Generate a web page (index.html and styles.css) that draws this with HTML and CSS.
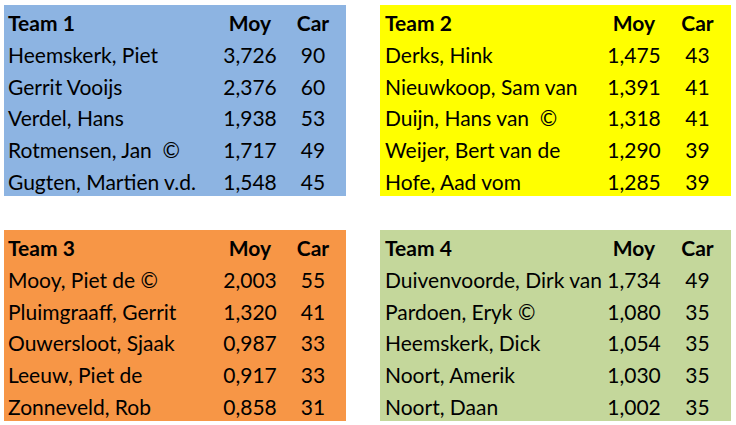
FILE: index.html
```html
<!DOCTYPE html>
<html lang="nl">
<head>
<meta charset="utf-8">
<title>Teams</title>
<link rel="stylesheet" href="styles.css">
</head>
<body>
<div class="board">
  <div class="team team-left blue">
    <div class="cell name head">Team 1</div><div class="cell num head">Moy</div><div class="cell num head">Car</div>
    <div class="cell name">Heemskerk, Piet</div><div class="cell num">3,726</div><div class="cell num">90</div>
    <div class="cell name">Gerrit Vooijs</div><div class="cell num">2,376</div><div class="cell num">60</div>
    <div class="cell name">Verdel, Hans</div><div class="cell num">1,938</div><div class="cell num">53</div>
    <div class="cell name">Rotmensen, Jan&nbsp; ©</div><div class="cell num">1,717</div><div class="cell num">49</div>
    <div class="cell name">Gugten, Martien v.d.</div><div class="cell num">1,548</div><div class="cell num">45</div>
  </div>
  <div class="team team-right yellow">
    <div class="cell name head">Team 2</div><div class="cell num head">Moy</div><div class="cell num head">Car</div>
    <div class="cell name">Derks, Hink</div><div class="cell num">1,475</div><div class="cell num">43</div>
    <div class="cell name">Nieuwkoop, Sam van</div><div class="cell num">1,391</div><div class="cell num">41</div>
    <div class="cell name">Duijn, Hans van&nbsp; ©</div><div class="cell num">1,318</div><div class="cell num">41</div>
    <div class="cell name">Weijer, Bert van de</div><div class="cell num">1,290</div><div class="cell num">39</div>
    <div class="cell name">Hofe, Aad vom</div><div class="cell num">1,285</div><div class="cell num">39</div>
  </div>
  <div class="team team-left orange">
    <div class="cell name head">Team 3</div><div class="cell num head">Moy</div><div class="cell num head">Car</div>
    <div class="cell name">Mooy, Piet de ©</div><div class="cell num">2,003</div><div class="cell num">55</div>
    <div class="cell name">Pluimgraaff, Gerrit</div><div class="cell num">1,320</div><div class="cell num">41</div>
    <div class="cell name">Ouwersloot, Sjaak</div><div class="cell num">0,987</div><div class="cell num">33</div>
    <div class="cell name">Leeuw, Piet de</div><div class="cell num">0,917</div><div class="cell num">33</div>
    <div class="cell name">Zonneveld, Rob</div><div class="cell num">0,858</div><div class="cell num">31</div>
  </div>
  <div class="team team-right green">
    <div class="cell name head">Team 4</div><div class="cell num head">Moy</div><div class="cell num head">Car</div>
    <div class="cell name">Duivenvoorde, Dirk van</div><div class="cell num">1,734</div><div class="cell num">49</div>
    <div class="cell name">Pardoen, Eryk ©</div><div class="cell num">1,080</div><div class="cell num">35</div>
    <div class="cell name">Heemskerk, Dick</div><div class="cell num">1,054</div><div class="cell num">35</div>
    <div class="cell name">Noort, Amerik</div><div class="cell num">1,030</div><div class="cell num">35</div>
    <div class="cell name">Noort, Daan</div><div class="cell num">1,002</div><div class="cell num">35</div>
  </div>
</div>
</body>
</html>
```
FILE: styles.css
```css
html, body {
  margin: 0;
  padding: 0;
  background: #ffffff;
}
body {
  font-family: Lato, "Liberation Sans", sans-serif;
  font-size: 21px;
  color: #000;
}
.board {
  display: grid;
  grid-template-columns: 342px 351px;
  grid-template-rows: 191px 191px;
  column-gap: 34px;
  row-gap: 34px;
  padding: 5px 0 0 4px;
}
.team {
  display: grid;
  grid-template-rows: repeat(6, 1fr);
}
.team-left { grid-template-columns: 1fr 60px 66px; }
.team-right { grid-template-columns: 1fr 60px 67px; }
.blue { background: #8db4e2; }
.yellow { background: #ffff00; }
.orange { background: #f79646; }
.green { background: #c4d79b; }
.cell {
  display: flex;
  align-items: center;
  white-space: nowrap;
  line-height: 1;
  padding-top: 3px;
}
.name { padding-left: 4px; }
.team-right .name { padding-left: 5px; }
.num { justify-content: center; }
.head { font-weight: 700; }
```
